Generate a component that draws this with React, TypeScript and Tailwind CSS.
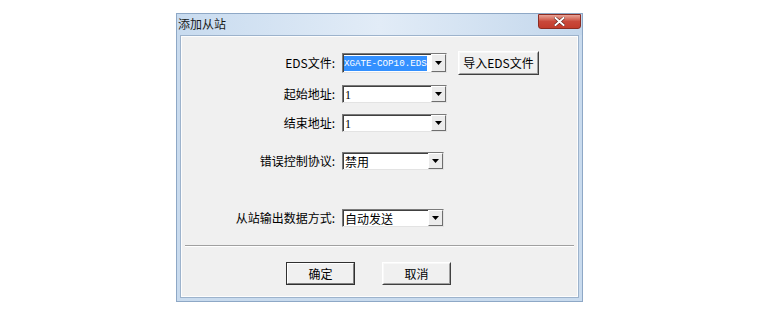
import React from "react";

const cjk = { fontFamily: '"Noto Sans CJK SC", "Liberation Sans", sans-serif' };

function Combo({ value, width, selected, serif }: { value: string; width: number; selected?: boolean; serif?: boolean }) {
  return (
    <div
      className="flex h-full items-stretch bg-white border border-t-[#7a7a7a] border-l-[#7a7a7a] border-r-[#e3e3e3] border-b-[#e3e3e3]"
      style={{ width }}
    >
      <div
        className={
          "flex flex-1 items-center overflow-hidden border-t border-l border-t-[#404040] border-l-[#404040] " +
          (selected ? "pl-0" : "pl-[1px]")
        }
      >
        {selected ? (
          <span
            className="bg-[#3390ff] text-white text-[9.2px] leading-[15px] whitespace-nowrap"
            style={{ fontFamily: '"Liberation Mono", monospace' }}
          >
            {value}
          </span>
        ) : (
          <span
            className="text-[12px] leading-[14px] text-black whitespace-nowrap"
            style={serif ? { fontFamily: '"Liberation Serif", serif' } : cjk}
          >
            {value}
          </span>
        )}
      </div>
      <div className="flex w-[15px] items-center justify-center bg-[#ececec] border border-t-white border-l-white border-r-[#6e6e6e] border-b-[#6e6e6e]">
        <svg width="7" height="4" viewBox="0 0 7 4">
          <path d="M0 0 H7 L3.5 4 Z" fill="#000" />
        </svg>
      </div>
    </div>
  );
}

function Row({ label, children, top, h }: { label: string; children: React.ReactNode; top: number; h: number }) {
  return (
    <div className="flex items-center" style={{ marginTop: top, height: h }}>
      <div className="w-[154px] pr-[1px] text-right text-[12px] leading-[14px] text-black" style={cjk}>
        {label}
      </div>
      <div className="ml-[6px] flex h-full items-center">{children}</div>
    </div>
  );
}

function Btn({ label, def, w, h }: { label: string; def?: boolean; w: number; h: number }) {
  return (
    <div
      className={
        "flex items-center justify-center bg-[#f0f0f0] text-[12px] text-black " +
        (def
          ? "border border-[#303030]"
          : "border border-t-[#ffffff] border-l-[#ffffff] border-r-[#404040] border-b-[#404040]")
      }
      style={{ ...cjk, width: w, height: h }}
    >
      <div
        className={
          "flex h-full w-full items-center justify-center border " +
          (def
            ? "border-t-white border-l-white border-r-[#808080] border-b-[#808080]"
            : "border-t-[#f8f8f8] border-l-[#f8f8f8] border-r-[#a0a0a0] border-b-[#a0a0a0]")
        }
      >
        {label}
      </div>
    </div>
  );
}

export default function App() {
  return (
    <div className="h-[320px] w-[760px] overflow-hidden bg-white pt-[13px]">
      <div className="ml-[176px] flex h-[289px] w-[407px] flex-col border border-[#8ea8c6] bg-[#c9dbee]">
        <div className="flex h-[21px] items-start justify-between bg-gradient-to-r from-[#c8dbef] via-[#e2ecf7] to-[#c3d7ec]">
          <span className="mt-[2px] ml-[1px] text-[12px] leading-[16px] text-[#1a1a1a]" style={cjk}>
            添加从站
          </span>
          <div className="mr-[1px] flex h-[15px] w-[43px] items-center justify-center rounded-b-[3px] border border-[#8c2c22] bg-gradient-to-b from-[#e8a397] via-[#c9483a] to-[#c23c2c]">
            <svg width="11" height="9" viewBox="0 0 11 9">
              <path d="M1.5 1 L9.5 8 M9.5 1 L1.5 8" stroke="#5a1a14" strokeWidth="3" strokeLinecap="square" />
              <path d="M1.5 1 L9.5 8 M9.5 1 L1.5 8" stroke="#ffffff" strokeWidth="2" strokeLinecap="square" />
            </svg>
          </div>
        </div>
        <div className="mx-[3px] mb-[3px] flex flex-1 flex-col border border-[#9db3cc] bg-[#f0f0f0]">
          <div className="flex flex-1 flex-col border border-[#fdfdfd]">
            <div className="flex items-center" style={{ marginTop: 14, height: 24 }}>
              <div className="w-[154px] pr-[1px] text-right text-[12px] leading-[14px] text-black" style={cjk}>
                EDS文件:
              </div>
              <div className="ml-[6px] flex h-[20px] items-center">
                <Combo value="XGATE-COP10.EDS" width={105} selected />
              </div>
              <div className="ml-[11px]">
                <Btn label="导入EDS文件" w={81} h={24} />
              </div>
            </div>
            <Row label="起始地址:" top={10} h={18}>
              <Combo value="1" width={105} serif />
            </Row>
            <Row label="结束地址:" top={11} h={18}>
              <Combo value="1" width={105} serif />
            </Row>
            <Row label="错误控制协议:" top={20} h={18}>
              <Combo value="禁用" width={102} />
            </Row>
            <Row label="从站输出数据方式:" top={39} h={18}>
              <Combo value="自动发送" width={102} />
            </Row>
            <div className="mx-[3px] mt-[18px] border-t border-b border-t-[#a0a0a0] border-b-white" />
            <div className="flex pl-[104px]" style={{ marginTop: 15 }}>
              <Btn label="确定" def w={69} h={23} />
              <div className="ml-[27px]">
                <Btn label="取消" w={69} h={23} />
              </div>
            </div>
          </div>
        </div>
      </div>
    </div>
  );
}
